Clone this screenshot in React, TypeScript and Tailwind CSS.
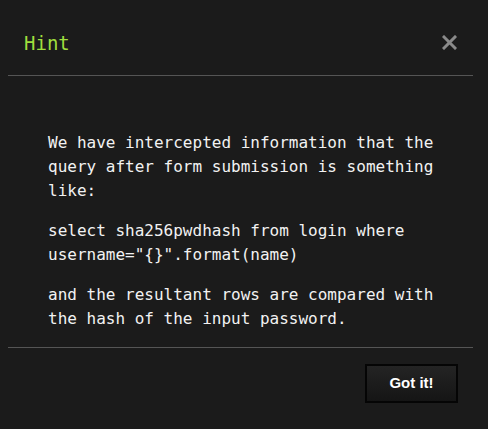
import React from "react";

export default function App() {
  return (
    <div className="w-[488px] h-[429px] bg-[#1b1b1b] pl-2 pr-[15px] overflow-hidden">
      <div className="flex items-start justify-between pl-4 pr-4 pt-[29px] pb-[18px] border-b border-[#555]">
        <h4
          className="text-[19px] leading-[28px] text-[#9fde3e]"
          style={{ fontFamily: '"DejaVu Sans Mono", "Liberation Mono", monospace' }}
        >
          Hint
        </h4>
        <button className="mt-[6px] w-[15px] h-[15px] flex items-center justify-center">
          <svg width="15" height="15" viewBox="0 0 15 15">
            <path d="M2 2 L13 13 M13 2 L2 13" stroke="#8a8a8a" strokeWidth="3" strokeLinecap="square" />
          </svg>
        </button>
      </div>
      <div
        className="pl-10 pr-6 pt-[55px] text-[16px] leading-6 text-[#f2f2f2] border-b border-[#555]"
        style={{ fontFamily: '"DejaVu Sans Mono", "Liberation Mono", monospace' }}
      >
        <p className="mb-4">We have intercepted information that the query after form submission is something like:</p>
        <p className="mb-4">{'select sha256pwdhash from login where username="{}".format(name)'}</p>
        <p className="mb-4">and the resultant rows are compared with the hash of the input password.</p>
      </div>
      <div className="flex justify-end pt-4 pr-[15px]">
        <button
          className="w-[93px] h-[39px] border-2 border-[#050505] bg-gradient-to-b from-[#242424] to-[#151515] text-white font-bold text-[15px]"
          style={{ fontFamily: '"Liberation Sans", Arial, sans-serif' }}
        >
          Got it!
        </button>
      </div>
    </div>
  );
}
